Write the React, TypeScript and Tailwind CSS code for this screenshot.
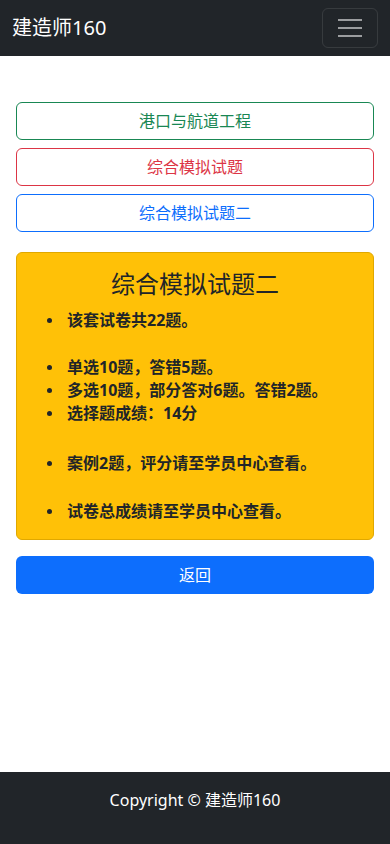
const FONT = { fontFamily: '"Noto Sans", "Noto Sans CJK SC", sans-serif' }

const items: { text: string; h: string }[] = [
  { text: '该套试卷共22题。', h: 'h-[47px]' },
  { text: '单选10题，答错5题。', h: 'h-[23px]' },
  { text: '多选10题，部分答对6题。答错2题。', h: 'h-[23px]' },
  { text: '选择题成绩：14分', h: 'h-[50px]' },
  { text: '案例2题，评分请至学员中心查看。', h: 'h-[48px]' },
  { text: '试卷总成绩请至学员中心查看。', h: 'h-[24px]' },
]

export default function App() {
  return (
    <div className="min-h-[844px] flex flex-col bg-white text-[#212529]" style={FONT}>
      <nav className="h-[56px] bg-[#212529] flex items-center justify-between px-3">
        <span className="text-white text-[20px] leading-[30px]">建造师160</span>
        <button className="w-[56px] h-[40px] border border-white/10 rounded-md flex flex-col items-center justify-center gap-[6px]">
          <span className="block w-[24px] h-[2px] bg-white/55" />
          <span className="block w-[24px] h-[2px] bg-white/55" />
          <span className="block w-[24px] h-[2px] bg-white/55" />
        </button>
      </nav>

      <main className="flex-1 px-4 pt-[46px]">
        <div className="flex flex-col gap-[8px]">
          <button className="h-[38px] w-full border border-[#198754] rounded-md text-[#198754] text-[16px]">
            港口与航道工程
          </button>
          <button className="h-[38px] w-full border border-[#dc3545] rounded-md text-[#dc3545] text-[16px]">
            综合模拟试题
          </button>
          <button className="h-[38px] w-full border border-[#0d6efd] rounded-md text-[#0d6efd] text-[16px]">
            综合模拟试题二
          </button>
        </div>

        <div className="mt-[20px] bg-[#ffc107] border border-[#e0a800] rounded-md px-4 pt-4 pb-4">
          <h5 className="text-center text-[24px] leading-[29px] font-normal">综合模拟试题二</h5>
          <ul className="mt-[10px] pl-[34px]">
            {items.map((it) => (
              <li key={it.text} className={`${it.h} relative text-[16px] leading-[24px] font-bold`}>
                <span className="absolute left-[-20px] top-[10px] w-[5px] h-[5px] rounded-full bg-[#212529]" />
                {it.text}
              </li>
            ))}
          </ul>
        </div>

        <button className="mt-[16px] h-[38px] w-full bg-[#0d6efd] rounded-md text-white text-[16px]">
          返回
        </button>
      </main>

      <footer className="h-[72px] bg-[#212529] flex justify-center pt-[16px]">
        <span className="text-white text-[16px] leading-[24px]">Copyright © 建造师160</span>
      </footer>
    </div>
  )
}
